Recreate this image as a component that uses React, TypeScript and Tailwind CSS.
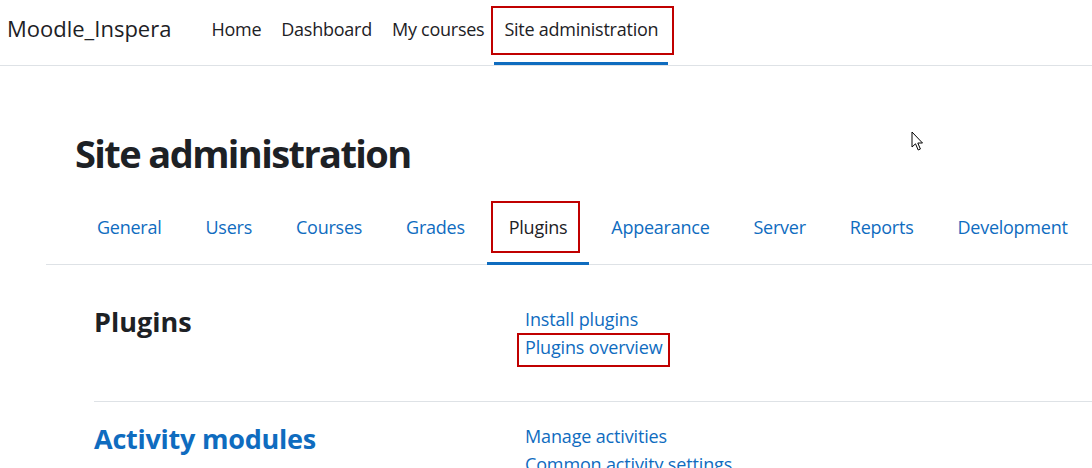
import React from "react"

const font = { fontFamily: '"Open Sans", "Noto Sans", sans-serif' }

const topNav = ["Home", "Dashboard", "My courses", "Site administration"]
const tabs = ["General", "Users", "Courses", "Grades", "Plugins", "Appearance", "Server", "Reports", "Development"]

function RedBox({ className }: { className: string }) {
  return <span className={`pointer-events-none absolute border-2 border-[#c00000] ${className}`} />
}

function Cursor() {
  return (
    <svg className="absolute left-[911px] top-[131px]" width="14" height="21" viewBox="0 0 14 21">
      <path
        d="M1 1 L1 16 L4.5 12.8 L7.2 19 L9.4 18 L6.8 12 L11.5 12 Z"
        fill="#fff"
        stroke="#000"
        strokeWidth="1"
        strokeLinejoin="round"
      />
    </svg>
  )
}

export default function App() {
  return (
    <div className="relative min-h-[468px] w-full overflow-hidden bg-white text-[#1d2125]" style={font}>
      {/* navbar */}
      <header className="flex h-[66px] items-stretch border-b border-[#dee2e6]">
        <div className="ml-[7px] pt-[13px] text-[22px] leading-[30px]">Moodle_Inspera</div>
        <nav className="ml-[30px] flex">
          {topNav.map((item) => {
            const active = item === "Site administration"
            return (
              <div
                key={item}
                className={`relative px-[10px] pt-[16px] text-[18px] leading-[27px] tracking-[-0.25px] border-b-[3px] ${
                  active ? "border-[#0f6cbf]" : "border-transparent"
                }`}
              >
                {item}
                {active && <RedBox className="left-[-3px] right-[-6px] top-[6px] bottom-[7px]" />}
              </div>
            )
          })}
        </nav>
      </header>

      <div className="ml-[46px]">
        <h1 className="ml-[29px] mt-[64px] text-[38px] font-bold leading-[46px] tracking-[-1.6px]">
          Site administration
        </h1>

        {/* tabs */}
        <div className="mt-[14px] flex border-b border-[#dee2e6] pl-[29px]">
          {tabs.map((tab) => {
            const active = tab === "Plugins"
            return (
              <div
                key={tab}
                className={`relative -mb-px border-b-[3px] px-[22px] pt-[24px] pb-[21px] text-[18px] leading-[27px] tracking-[-0.25px] ${
                  active ? "border-[#0f6cbf] text-[#1d2125]" : "border-transparent text-[#0f6cbf]"
                }`}
              >
                {tab}
                {active && <RedBox className="left-[4px] right-[9px] top-[11px] bottom-[9px]" />}
              </div>
            )
          })}
        </div>

        {/* sections */}
        <div className="mt-[20px] pl-[48px]">
          <section className="grid grid-cols-[431px_1fr] border-b border-[#dee2e6] pt-[20px] pb-[40px]">
            <h3 className="text-[27px] font-bold leading-[34px]">Plugins</h3>
            <div className="flex flex-col items-start text-[18px] leading-[28px] tracking-[-0.15px] text-[#0f6cbf]">
              <span>Install plugins</span>
              <span className="relative">
                Plugins overview
                <RedBox className="left-[-8px] right-[-7px] top-0 bottom-[-6px]" />
              </span>
            </div>
          </section>
          <section className="grid grid-cols-[431px_1fr] pt-[20px]">
            <h3 className="text-[27px] font-bold leading-[34px] tracking-[-0.25px] text-[#0f6cbf]">
              Activity modules
            </h3>
            <div className="flex flex-col items-start text-[18px] leading-[28px] tracking-[-0.15px] text-[#0f6cbf]">
              <span>Manage activities</span>
              <span>Common activity settings</span>
            </div>
          </section>
        </div>
      </div>

      <Cursor />
    </div>
  )
}
